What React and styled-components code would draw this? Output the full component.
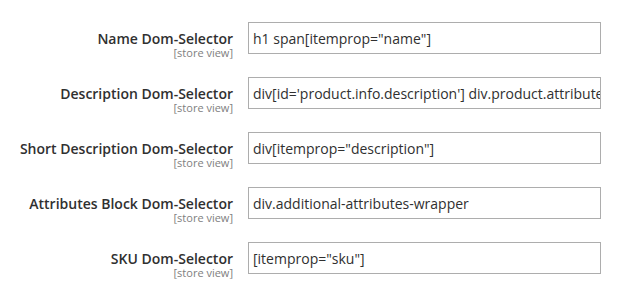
import styled, { createGlobalStyle } from "styled-components";

const GlobalStyle = createGlobalStyle`
  body {
    margin: 0;
    background: #ffffff;
    font-family: "Open Sans", "Liberation Sans", sans-serif;
  }
`;

const Form = styled.div`
  display: flex;
  flex-direction: column;
  padding-top: 22px;
`;

const Row = styled.div`
  display: grid;
  grid-template-columns: 233px 353px;
  column-gap: 15px;
  align-items: start;
  height: 55px;
`;

const LabelCell = styled.div`
  display: flex;
  flex-direction: column;
  align-items: flex-end;
  text-align: right;
  padding-top: 8.5px;
`;

const Label = styled.label`
  font-size: 14px;
  font-weight: 600;
  line-height: 16px;
  color: #303030;
`;

const Scope = styled.span`
  font-size: 11px;
  line-height: 12px;
  color: #808080;
`;

const TextInput = styled.input`
  box-sizing: border-box;
  width: 353px;
  height: 32px;
  margin: 0;
  padding: 0 0 0 4px;
  border: 1px solid #adadad;
  border-radius: 0;
  background: #ffffff;
  font-family: "Open Sans", "Liberation Sans", sans-serif;
  font-size: 14px;
  color: #303030;
  outline: none;
`;

const fields = [
  { label: "Name Dom-Selector", value: 'h1 span[itemprop="name"]' },
  {
    label: "Description Dom-Selector",
    value: "div[id='product.info.description'] div.product.attribute.description",
  },
  { label: "Short Description Dom-Selector", value: 'div[itemprop="description"]' },
  { label: "Attributes Block Dom-Selector", value: "div.additional-attributes-wrapper" },
  { label: "SKU Dom-Selector", value: '[itemprop="sku"]' },
];

export default function App() {
  return (
    <>
      <GlobalStyle />
      <Form>
        {fields.map((f) => (
          <Row key={f.label}>
            <LabelCell>
              <Label>{f.label}</Label>
              <Scope>[store view]</Scope>
            </LabelCell>
            <TextInput type="text" defaultValue={f.value} readOnly />
          </Row>
        ))}
      </Form>
    </>
  );
}
